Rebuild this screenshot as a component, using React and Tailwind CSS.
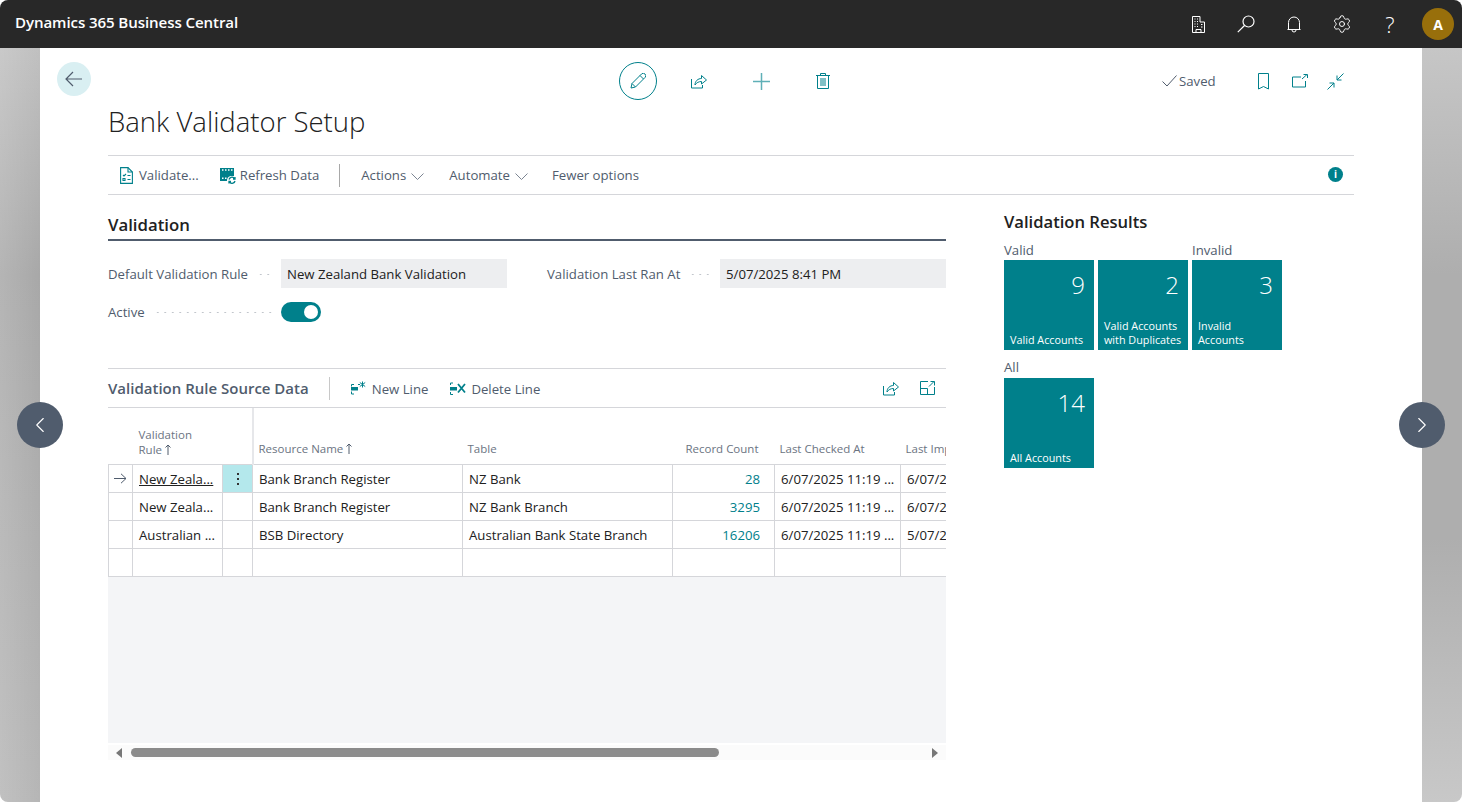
import { ChevronLeft, ChevronRight, Settings } from "lucide-react";

const rows = [
  ["New Zeala...", "Bank Branch Register", "NZ Bank", "28", "6/07/2025 11:19 ...", "6/07/2025 11:19 ..."],
  ["New Zeala...", "Bank Branch Register", "NZ Bank Branch", "3295", "6/07/2025 11:19 ...", "6/07/2025 11:19 ..."],
  ["Australian ...", "BSB Directory", "Australian Bank State Branch", "16206", "6/07/2025 11:19 ...", "5/07/2025 11:19 ..."],
  ["", "", "", "", "", ""],
];

function Building() {
  return (
    <svg width="13" height="17" viewBox="0 0 13 17" fill="none" stroke="#fff" strokeWidth="1">
      <path d="M.5 16.500V.5h7.500v5.500h4.500v10.500z" />
      <path d="M4 16.500v-3h5v3" />
      <path d="M2.500 3h1M5 3h1M2.500 5.500h1M5 5.500h1M2.500 8h1M5 8h1M2.500 10.500h1M5 10.500h1M9 8.500h1.500M9 11h1.500" />
    </svg>
  );
}

function SearchIcon() {
  return (
    <svg width="18" height="18" viewBox="0 0 18 18" fill="none" stroke="#fff" strokeWidth="1.200">
      <circle cx="11.500" cy="6.500" r="5.500" />
      <path d="M7.500 10.500L.8 17.200" />
    </svg>
  );
}

function BellIcon() {
  return (
    <svg width="14" height="17" viewBox="0 0 14 17" fill="none" stroke="#fff" strokeWidth="1">
      <path d="M1.500 13.500V6.500a5.500 5.500 0 0 1 11 0v7z" />
      <path d="M.5 13.500h13M5 14a2 2 0 0 0 4 0" />
    </svg>
  );
}

function ShareIcon() {
  return (
    <svg width="16" height="15" viewBox="0 0 16 15" fill="none" stroke="#00808b" strokeWidth="1">
      <path d="M.5 5v9h11v-3" />
      <path d="M4 11c0-4 3-6.500 6.500-6.500V1.500l5 4.500-5 4V7.500C8 7.500 5.500 8.500 4 11z" />
    </svg>
  );
}

function ToolbarDoc() {
  return (
    <svg width="13" height="17" viewBox="0 0 13 17" fill="none" stroke="#00808b" strokeWidth="1.100">
      <path d="M.6 16.400V.6h7.400l4.400 4.400v11.400z" />
      <path d="M8 .6v4.400h4.400" />
      <path d="M3 8l1 1 2-2M7.500 8.500h3M3 11.500h2V13.500H3zM7.500 12.500h3" />
    </svg>
  );
}

function RefreshData() {
  return (
    <svg width="16" height="17" viewBox="0 0 16 17">
      <path fill="#00808b" d="M0 1h14v8h-3.500A5 5 0 0 0 7 14H0z" />
      <path fill="#fff" d="M2 2.200h1.500v1.600H2zM5 2.200h1.500v1.600H5zM8 2.200h1.500v1.600H8zM11 2.200h1.500v1.600H11zM2 10.500h1.500v1.600H2zM5 10.500h1.500v1.600H5z" />
      <path fill="none" stroke="#00808b" strokeWidth="1.300" d="M9 12.500a3 3 0 0 1 5-1.500l1 1M15 14a3 3 0 0 1-5 1.500l-1-1M15 10v2h-2M9 16.500v-2h2" />
    </svg>
  );
}

function NewLine() {
  return (
    <svg width="16" height="15" viewBox="0 0 16 15" fill="none" stroke="#00808b" strokeWidth="1">
      <path d="M3 3.500H.5v2M.5 10.500v2.500H3" />
      <rect x="0" y="6" width="7" height="3.500" fill="#00808b" stroke="none" />
      <path d="M7 3.500h2M11.500 .5v6M8.800 1.500l5.400 4M14.200 1.500l-5.400 4" />
    </svg>
  );
}

function DeleteLine() {
  return (
    <svg width="16" height="13" viewBox="0 0 16 13" fill="none" stroke="#00808b" strokeWidth="1">
      <path d="M3 1H.5v2M.5 10v2.500H3" />
      <rect x="0" y="5" width="7" height="3.500" fill="#00808b" stroke="none" />
      <path d="M8 2l7 8.500M15 2l-7 8.500" strokeWidth="1.800" />
    </svg>
  );
}

function Chevron() {
  return (
    <svg className="ml-[5px] mt-[2px]" width="13" height="7" viewBox="0 0 13 7" fill="none" stroke="#7c8592" strokeWidth="1">
      <path d="M.5.5l6 6 6-6" />
    </svg>
  );
}

function SortUp() {
  return (
    <svg className="inline-block ml-[3px] align-[-1px]" width="6" height="11" viewBox="0 0 6 11" fill="none" stroke="#505c6d" strokeWidth="1">
      <path d="M3 11V1M.5 3.500L3 1l2.500 2.500" />
    </svg>
  );
}

function Leader() {
  return <span className="flex-1 h-[3px] ml-[9px] mr-[8px] bg-[radial-gradient(circle,#c2c6cc_1px,transparent_1px)] bg-[length:7.500px_3px]" />;
}

function Tile({ value, label }) {
  return (
    <div className="w-[90px] h-[90px] bg-[#00808b] text-white flex flex-col justify-between pl-[6px] pr-[9px] pb-[3px]">
      <div className="text-right text-[24px] font-light leading-[32px] pt-[9px]">{value}</div>
      <div className="text-[10.800px] font-medium leading-[14px] whitespace-nowrap">{label}</div>
    </div>
  );
}

function Field({ label, value }) {
  return (
    <div className="flex items-center h-[29px] w-[399px]">
      <div className="flex items-center text-[#505c6d] shrink-0 w-[173px] pt-[2px]">
        <span className="whitespace-nowrap">{label}</span>
        <Leader />
      </div>
      <div className="flex-1 h-[29px] bg-[#edeef0] pl-[6px] pt-[1px] leading-[28px] text-[#212121] whitespace-nowrap overflow-hidden">{value}</div>
    </div>
  );
}

function ScrollArrow({ right }) {
  return (
    <svg width="6" height="10" viewBox="0 0 6 10" fill="#777">
      <path d={right ? "M0 0l6 5-6 5z" : "M6 0L0 5l6 5z"} />
    </svg>
  );
}

export default function App() {
  return (
    <div className="w-[1462px] h-[802px] overflow-hidden rounded-[8px] flex flex-col relative font-['Open_Sans','Noto_Sans',sans-serif] text-[13.200px] text-[#212121]">
      <header className="h-12 shrink-0 bg-[#282828] text-white flex items-center pl-[15px]">
        <span className="text-[15.100px] font-semibold tracking-[-0.1px] pb-[4px]">Dynamics 365 Business Central</span>
        <div className="ml-auto flex items-center pr-2">
          <div className="w-12 flex justify-center"><Building /></div>
          <div className="w-12 flex justify-center"><SearchIcon /></div>
          <div className="w-12 flex justify-center"><BellIcon /></div>
          <div className="w-12 flex justify-center"><Settings size={20} strokeWidth={1.150} /></div>
          <div className="w-12 flex justify-center text-[22px] font-light leading-none">?</div>
          <div className="ml-2 w-8 h-8 rounded-full bg-[#986f0b] flex items-center justify-center text-[14px] font-bold">A</div>
        </div>
      </header>

      <div className="flex-1 flex min-h-0">
        <div className="w-10 bg-[linear-gradient(to_right,rgba(255,255,255,0.15),rgba(255,255,255,0)),linear-gradient(to_bottom,#c0c0c0,#a8a8a8_30%,#b0b0b0_70%,#b6b6b6)]" />
        <main className="w-[1382px] bg-white">
          {/* page actions */}
          <div className="flex items-start pt-[14px] pl-[17px]">
            <button className="w-[34px] h-[34px] rounded-full bg-[#d9eff2] flex items-center justify-center">
              <svg width="18" height="16" viewBox="0 0 18 16" fill="none" stroke="#505c6d" strokeWidth="1.200">
                <path d="M17 8H1M8 1L1 8l7 7" />
              </svg>
            </button>
            <button className="ml-[528px] w-[38px] h-[38px] rounded-full border border-[#00808b] flex items-center justify-center">
              <svg width="16" height="16" viewBox="0 0 16 16" fill="none" stroke="#00808b" strokeWidth="1">
                <path d="M1 15l1-4.500L11.500 1a1.800 1.800 0 0 1 3.500 3.500L5.500 14zM2 10.500L5.500 14M10 2.500L13.500 6" />
              </svg>
            </button>
            <div className="h-[38px] ml-[34px] flex items-center"><ShareIcon /></div>
            <div className="h-[38px] ml-[46px] flex items-center">
              <svg width="17" height="17" viewBox="0 0 17 17" stroke="#5fb0b7" strokeWidth="1.500"><path d="M8.500 0v17M0 8.500h17" /></svg>
            </div>
            <div className="h-[38px] ml-[46px] flex items-center">
              <svg width="14" height="16" viewBox="0 0 14 16" fill="none" stroke="#00808b" strokeWidth="1">
                <path d="M0 2.500h14M4.500 2.500V.5h5v2M1.500 2.500v13h11v-13M5 5v8M7 5v8M9 5v8" />
              </svg>
            </div>
            <div className="h-[38px] ml-[332px] flex items-center text-[#505c6d]">
              <svg className="mr-[2px]" width="15" height="12" viewBox="0 0 15 12" fill="none" stroke="#505c6d" strokeWidth="1"><path d="M.5 6.500l4.500 4.500L14.500.5" /></svg>
              <span className="pt-[1px]">Saved</span>
            </div>
            <div className="h-[38px] ml-[41px] flex items-center">
              <svg width="13" height="17" viewBox="0 0 13 17" fill="none" stroke="#00808b" strokeWidth="1"><path d="M1.500.5h10v15.500l-5-2.500-5 2.500z" /></svg>
            </div>
            <div className="h-[38px] ml-[22px] flex items-center">
              <svg width="16" height="14" viewBox="0 0 16 14" fill="none" stroke="#00808b" strokeWidth="1"><path d="M9 3H.5v10h13V7M10 5l5-4.500M11.500.5H15.500V4" /></svg>
            </div>
            <div className="h-[38px] ml-[19px] flex items-center">
              <svg width="17" height="17" viewBox="0 0 17 17" fill="none" stroke="#00808b" strokeWidth="1"><path d="M16.500.5L10 7M10 2.500V7h4.500M.5 16.500L7 10M2.500 10H7v4.500" /></svg>
            </div>
          </div>

          <div className="mx-[68px]">
            <h1 className="text-[27.500px] font-light leading-[44px] mb-[11px] text-[#212121]">Bank Validator Setup</h1>

            {/* action bar */}
            <div className="h-10 border-y border-[#d5d6da] flex items-center text-[#505c6d]">
              <span className="ml-[12px] mr-[6px]"><ToolbarDoc /></span>
              <span className="pt-[2px]">Validate...</span>
              <span className="ml-[21px] mr-[4px]"><RefreshData /></span>
              <span className="pt-[2px]">Refresh Data</span>
              <span className="ml-[20px] mr-[21px] w-px h-[23px] bg-[#a8a8a8]" />
              <span className="pt-[2px]">Actions</span>
              <Chevron />
              <span className="ml-[25px] pt-[2px]">Automate</span>
              <Chevron />
              <span className="ml-[24px] pt-[2px]">Fewer options</span>
              <span className="ml-auto mr-[11px] mb-[2px] w-[15px] h-[15px] rounded-full bg-[#00808b] text-white text-[10px] font-bold leading-[15px] text-center">i</span>
            </div>

            <div className="flex">
              <div className="w-[838px]">
                <h2 className="mt-[19px] h-[25px] text-[16.800px] font-semibold leading-[22px] text-[#212121] border-b-2 border-[#505c6d] box-content">Validation</h2>

                <div className="flex mt-[18px] gap-[40px]">
                  <Field label="Default Validation Rule" value="New Zealand Bank Validation" />
                  <Field label="Validation Last Ran At" value="5/07/2025 8:41 PM" />
                </div>
                <div className="flex items-center mt-[14px] h-5 text-[#505c6d]">
                  <div className="w-[173px] flex items-center pt-[1px]">
                    <span>Active</span>
                    <Leader />
                  </div>
                  <div className="w-10 h-5 rounded-full bg-[#00808b] flex items-center justify-end pr-[3px]">
                    <div className="w-[14px] h-[14px] rounded-full bg-white" />
                  </div>
                </div>

                {/* list part */}
                <div className="mt-[46px] h-10 border-y border-[#d5d6da] flex items-center text-[#505c6d]">
                  <span className="text-[15px] font-semibold text-[#505c6d] pt-[1px]">Validation Rule Source Data</span>
                  <span className="ml-[20px] mr-[21px] w-px h-[23px] bg-[#c8c8c8]" />
                  <span className="mr-[5px]"><NewLine /></span>
                  <span className="pt-[4px]">New Line</span>
                  <span className="ml-[22px] mr-[5px]"><DeleteLine /></span>
                  <span className="pt-[4px]">Delete Line</span>
                  <span className="ml-auto"><ShareIcon /></span>
                  <span className="ml-[21px] mr-[11px]">
                    <svg width="15" height="14" viewBox="0 0 15 14" fill="none" stroke="#00808b" strokeWidth="1">
                      <path d="M8 .5H.5v13h14V6M.5 7.500h7v6M9 5.500L14 .5M10.500.5h4v4" />
                    </svg>
                  </span>
                </div>

                <div className="w-[838px] h-[335px] bg-[#f4f5f7] overflow-hidden">
                  <table className="table-fixed border-collapse w-[918px] bg-white">
                    <colgroup>
                      <col className="w-[24px]" />
                      <col className="w-[90px]" />
                      <col className="w-[30px]" />
                      <col className="w-[210px]" />
                      <col className="w-[210px]" />
                      <col className="w-[102px]" />
                      <col className="w-[126px]" />
                      <col className="w-[126px]" />
                    </colgroup>
                    <thead>
                      <tr className="h-[56px] text-left text-[11.500px] leading-[15px] text-[#6b7482]">
                        <th />
                        <th className="font-normal align-bottom pl-[6px] pb-[7px]">Validation<br />Rule<SortUp /></th>
                        <th className="border-r-2 border-[#e6e7ea]" />
                        <th className="font-normal align-bottom pl-[5px] pb-[8px]">Resource Name<SortUp /></th>
                        <th className="font-normal align-bottom pl-[5px] pb-[8px]">Table</th>
                        <th className="font-normal align-bottom text-right pr-[16px] pb-[8px]">Record Count</th>
                        <th className="font-normal align-bottom pl-[5px] pb-[8px]">Last Checked At</th>
                        <th className="font-normal align-bottom pl-[5px] pb-[8px] whitespace-nowrap overflow-hidden">Last Imported</th>
                      </tr>
                    </thead>
                    <tbody>
                      {rows.map((r, i) => (
                        <tr key={i} className="h-[28px] border border-[#d5d6da]">
                          <td className="border border-[#d5d6da] text-center p-0">
                            {i === 0 && (
                              <svg className="inline-block" width="13" height="11" viewBox="0 0 13 11" fill="none" stroke="#505c6d" strokeWidth="1"><path d="M0 5.500h12M7 .8l5 4.700-5 4.700" /></svg>
                            )}
                          </td>
                          <td className="border border-[#d5d6da] pl-[6px] pt-[4px] whitespace-nowrap overflow-hidden">
                            <span className={i === 0 ? "underline" : ""}>{r[0]}</span>
                          </td>
                          <td className={`border border-[#d5d6da] text-center p-0 ${i === 0 ? "bg-[#b4e8ec]" : ""}`}>
                            {i === 0 && <span className="inline-flex flex-col gap-[3px] align-middle">
                              <i className="w-[2px] h-[2px] bg-[#333]" /><i className="w-[2px] h-[2px] bg-[#333]" /><i className="w-[2px] h-[2px] bg-[#333]" />
                            </span>}
                          </td>
                          <td className="border border-[#d5d6da] pl-[6px] pt-[4px] whitespace-nowrap">{r[1]}</td>
                          <td className="border border-[#d5d6da] pl-[6px] pt-[4px] whitespace-nowrap">{r[2]}</td>
                          <td className="border border-[#d5d6da] text-right pr-[14px] pt-[4px] text-[#00808b]">{r[3]}</td>
                          <td className="border border-[#d5d6da] pl-[6px] pt-[4px] whitespace-nowrap overflow-hidden">{r[4]}</td>
                          <td className="border border-[#d5d6da] pl-[6px] pt-[4px] whitespace-nowrap overflow-hidden">{r[5]}</td>
                        </tr>
                      ))}
                    </tbody>
                  </table>
                </div>

                {/* horizontal scrollbar */}
                <div className="mt-[2px] h-[15px] bg-[#fbfbfb] flex items-center px-[8px]">
                  <ScrollArrow />
                  <div className="ml-[9px] w-[588px] h-[9px] rounded-full bg-[#8b8b8b]" />
                  <div className="ml-auto"><ScrollArrow right /></div>
                </div>
              </div>

              {/* results */}
              <aside className="ml-[58px] w-[350px]">
                <h3 className="mt-[15px] text-[16.600px] font-semibold leading-[24px] text-[#212121]">Validation Results</h3>
                <div className="flex gap-[4px] mt-[7px] text-[#505c6d] leading-[19px]">
                  <div>
                    <div>Valid</div>
                    <div className="flex gap-[4px]">
                      <Tile value="9" label="Valid Accounts" />
                      <Tile value="2" label={<>Valid Accounts<br />with Duplicates</>} />
                    </div>
                  </div>
                  <div>
                    <div>Invalid</div>
                    <Tile value="3" label={<>Invalid<br />Accounts</>} />
                  </div>
                </div>
                <div className="mt-[7px] text-[#505c6d] leading-[21px]">All</div>
                <Tile value="14" label="All Accounts" />
              </aside>
            </div>
          </div>
        </main>
        <div className="w-10 bg-[linear-gradient(to_bottom,#c6c6c6,#aeaeae_30%,#aeaeae_65%,#c8c8c8)]" />
      </div>

      <button className="absolute left-[17px] top-[402px] w-[46px] h-[46px] rounded-full bg-[#505c6d] flex items-center justify-center text-white">
        <ChevronLeft size={26} strokeWidth={1} />
      </button>
      <button className="absolute left-[1399px] top-[402px] w-[46px] h-[46px] rounded-full bg-[#505c6d] flex items-center justify-center text-white">
        <ChevronRight size={26} strokeWidth={1} />
      </button>
    </div>
  );
}
